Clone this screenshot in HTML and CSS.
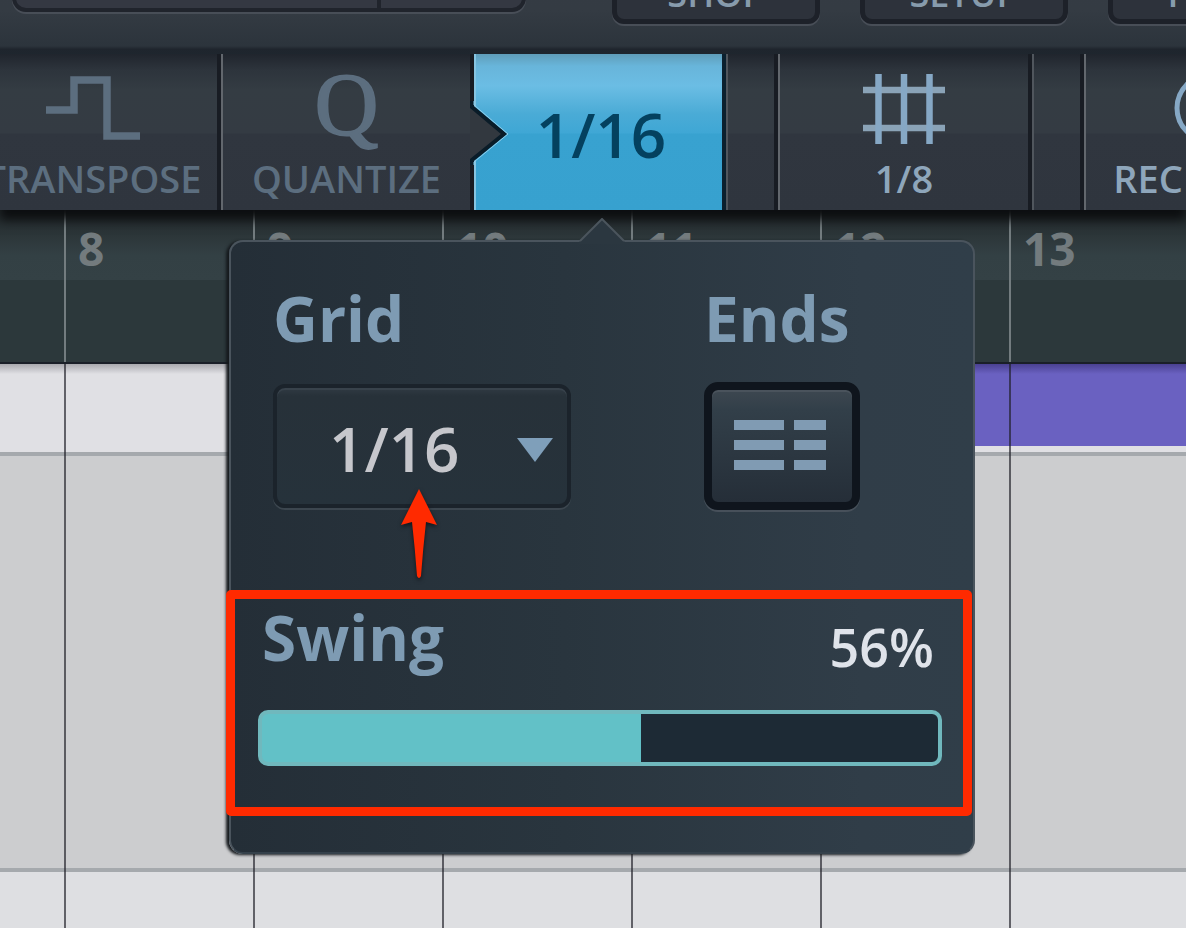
FILE: index.html
```html
<!DOCTYPE html>
<html lang="en">
<head>
<meta charset="utf-8">
<title>Quantize grid settings</title>
<link rel="stylesheet" href="styles.css">
</head>
<body>
<div class="app">
  <header class="topbar">
    <div class="display"><span class="display-part"></span><span class="display-part"></span></div>
    <nav class="menu">
      <button class="menu-button">SHOP</button>
      <button class="menu-button">SETUP</button>
      <button class="menu-button">HELP</button>
    </nav>
  </header>

  <div class="toolbar">
    <button class="tool muted first">
      <svg class="tool-icon" viewBox="0 0 94 72" width="94" height="72"><path d="M0 38H28V8H61V64H94" fill="none" stroke="currentColor" stroke-width="7.500"/></svg>
      <span class="tool-label">TRANSPOSE</span>
    </button>
    <button class="tool muted quantize">
      <span class="tool-letter">Q</span>
      <span class="tool-label">QUANTIZE</span>
    </button>
    <div class="anchor">
      <button class="tool-active" aria-expanded="true">1/16</button>
      <svg class="notch" viewBox="0 0 40 64" width="40" height="64"><path d="M0 5L34 33L0 60Z" fill="#32383f"/><path d="M2 0V6L34 33L2 59V64" fill="none" stroke="#0a1c28" stroke-width="4"/><path d="M4 0V4L38 33L4 61V64" fill="none" stroke="#8fcdea" stroke-width="1"/></svg>

      <section class="popover">
        <svg class="popover-tip" viewBox="0 0 48 26" width="48" height="26"><path d="M0 26L2 23L24 1L46 23L48 26Z" fill="#2b3740"/><path d="M2 23L24 1L46 23" fill="none" stroke="#4b555d" stroke-width="2"/></svg>
        <div class="fields">
          <label class="heading" for="grid">Grid</label>
          <label class="heading" for="ends">Ends</label>
          <div class="select-wrap">
            <select id="grid" class="select"><option>1/16</option><option>1/8</option></select>
            <svg class="caret" viewBox="0 0 36 24" width="36" height="24"><path d="M0 0H36L18 24Z" fill="#7f9fba"/></svg>
          </div>
          <button id="ends" class="ends">
            <svg viewBox="0 0 92 50" width="92" height="50" fill="#809bb3"><path d="M0 0H50V10H0zM60 0H92V10H60zM0 20H50V30H0zM60 20H92V30H60zM0 40H50V50H0zM60 40H92V50H60z"/></svg>
          </button>
        </div>
        <div class="swing">
          <div class="swing-head">
            <label class="heading" for="swing">Swing</label>
            <output class="percent" for="swing">56%</output>
          </div>
          <input id="swing" class="slider" type="range" min="0" max="100" value="56" style="--value:56%">
        </div>
        <svg class="pointer" viewBox="0 0 36 90" width="36" height="90"><path d="M18 0L36 36L25 33Q22 60 20 87Q18 91 16 87Q14 60 11 33L0 36Z" fill="#ff2a00"/></svg>
      </section>
    </div>
    <div class="spacer"></div>
    <button class="tool">
      <svg class="tool-icon" viewBox="0 0 82 72" width="82" height="72" fill="none" stroke-width="6.500"><path d="M0 18H82M0 56H82" stroke="#8aa3b7"/><path d="M15.500 2V72M41 2V72M66.500 2V72" stroke="#86a8c5"/></svg>
      <span class="tool-label">1/8</span>
    </button>
    <div class="spacer"></div>
    <button class="tool">
      <svg class="tool-icon" viewBox="0 0 72 72" width="72" height="72"><circle cx="36" cy="36" r="33" fill="none" stroke="#86a8c5" stroke-width="5"/></svg>
      <span class="tool-label">REC MODE</span>
    </button>
  </div>

  <div class="ruler">
    <span class="bar">8</span><span class="bar">9</span><span class="bar">10</span><span class="bar">11</span><span class="bar">12</span><span class="bar">13</span>
  </div>

  <main class="lanes">
    <div class="lane lane-clip"><div class="clip"></div></div>
    <div class="lane lane-tall"></div>
    <div class="lane lane-rest"></div>
  </main>
</div>
</body>
</html>
```
FILE: styles.css
```css
* { box-sizing: border-box; }

body {
  margin: 0;
  font-family: "Open Sans", "Noto Sans", sans-serif;
  font-weight: 600;
}

button, select { font: inherit; }

.app {
  display: flex;
  flex-direction: column;
  min-height: 100vh;
  overflow: hidden;
}

/* Top bar */
.topbar {
  display: flex;
  align-items: flex-start;
  flex: none;
  height: 94px;
  margin-top: -40px;
  padding-left: 12px;
  background: linear-gradient(#353b44 0, #343b43 50px, #2c343c 86px, #20262e 89px, #1f272f 100%);
}

.display {
  display: flex;
  flex: none;
  width: 514px;
  height: 52px;
  border: 4px solid #20242c;
  border-radius: 14px;
  background: #343842;
  box-shadow: 0 2px 0 #484e57;
}

.display-part { flex: 28; }
.display-part:first-child { flex: 72; border-right: 4px solid #20242c; }

.menu {
  display: flex;
  gap: 40px;
  margin-left: 86px;
}

.menu-button {
  flex: none;
  width: 208px;
  height: 64px;
  padding: 4px 0 0;
  border: 5px solid #1d2129;
  border-radius: 12px;
  background: #2d323b;
  box-shadow: 0 2px 0 #484e57;
  color: #879bac;
  font-size: 36px;
  line-height: 48px;
}

/* Toolbar */
.toolbar {
  position: relative;
  z-index: 2;
  display: flex;
  flex: none;
  height: 156px;
  background: linear-gradient(#20252d 0, #2d343c 16px, #343c43 36px, #343b43 79px, #30363f 80px, #2f353e 100%);
  box-shadow: 0 10px 10px #0c0e10;
}

.tool {
  display: flex;
  flex: none;
  flex-direction: column;
  align-items: center;
  gap: 10px;
  width: 254px;
  padding: 18px 0 0;
  border: 0;
  border-left: 2px solid #62676d;
  border-right: 4px solid #181c23;
  background: none;
  color: #8ea6bb;
  white-space: nowrap;
}

.first { margin-left: -33px; }
.quantize { width: 253px; }
.muted { color: #5c6e7f; }

.tool-icon { flex: none; }

.tool-letter {
  height: 72px;
  font: 88px/66px "Liberation Serif", serif;
  -webkit-text-stroke: 2px currentColor;
}

.tool-label { font-size: 38px; line-height: 48px; }

.spacer {
  flex: none;
  width: 52px;
  border-left: 2px solid #50565d;
  border-right: 4px solid #181c23;
}

.anchor {
  position: relative;
  flex: none;
  width: 252px;
}

.tool-active {
  width: 100%;
  height: 100%;
  padding: 4px 0 0 4px;
  border: 0;
  border-left: 2px solid #86c5e2;
  border-right: 4px solid #0b202e;
  background: linear-gradient(#5f9db9 0, #68b5da 12px, #6bbde4 32px, #4aabd6 60px, #3fa7d5 79px, #38a2d0 80px, #37a1cf 100%);
  color: #04415f;
  font-size: 62px;
}

.notch {
  position: absolute;
  top: 47px;
  left: -4px;
}

/* Popover */
.popover {
  position: absolute;
  top: 186px;
  left: 50%;
  width: 746px;
  margin-left: 2px;
  padding: 44px 0 36px;
  transform: translateX(-50%);
  border: 2px solid #4a545d;
  border-bottom-color: #35414b;
  border-radius: 14px;
  background: linear-gradient(90deg, #242e37, #29353e 45%, #303d48 85%, #303e49);
  box-shadow: -3px 1px 3px #15191d;
}

.popover-tip {
  position: absolute;
  top: -24px;
  left: 50%;
  margin-left: -24px;
}

.fields {
  display: grid;
  grid-template-columns: 431px 156px;
  row-gap: 32px;
  align-items: center;
  padding-left: 42px;
}

.heading {
  color: #7e9bb3;
  font-size: 62px;
  font-weight: 700;
  line-height: 64px;
}

.select-wrap {
  position: relative;
  width: 298px;
}

.select {
  display: block;
  width: 100%;
  height: 124px;
  padding: 4px 0 0 52px;
  appearance: none;
  border: 4px solid #1b232b;
  border-radius: 12px;
  background: linear-gradient(#303a43, #273139 8px, #26323b);
  box-shadow: 0 2px 0 #3c464f, inset 0 2px 0 #38424b;
  color: #c6c7cc;
  font-size: 62px;
}

.caret {
  position: absolute;
  top: 54px;
  right: 18px;
  pointer-events: none;
}

.ends {
  display: flex;
  align-items: center;
  justify-content: center;
  height: 128px;
  padding: 0 4px 2px 0;
  border: 8px solid #0f151d;
  border-radius: 14px;
  background: linear-gradient(#3d4750, #323f49 20px, #252e38);
  box-shadow: 0 2px 0 #47505a, inset 0 2px 0 #4a535c;
}

.swing {
  margin: 80px 1px 0 -5px;
  padding: 6px 21px 41px 23px;
  border: 9px solid #ff2a00;
  border-radius: 5px;
}

.swing-head {
  display: flex;
  align-items: flex-end;
  justify-content: space-between;
  padding: 0 8px 0 4px;
}

.percent {
  color: #dfe3ea;
  font-size: 52px;
  line-height: 44px;
}

.slider {
  display: block;
  width: 100%;
  height: 56px;
  margin: 41px 0 0;
  appearance: none;
  border: 4px solid #70b8bd;
  border-radius: 10px;
  background: linear-gradient(90deg, #62c1c7 var(--value), #1d2a35 var(--value));
}

.slider::-webkit-slider-thumb { appearance: none; width: 0; }

.pointer {
  position: absolute;
  top: 247px;
  left: 170px;
  filter: drop-shadow(0 2px 2px #10151a);
}

/* Timeline */
.ruler {
  display: flex;
  flex: none;
  height: 152px;
  padding-left: 64px;
  background: linear-gradient(#23292b 0, #334044 45px, #344145 70px, #2c383b 70px, #2c383b 100%);
}

.bar {
  flex: none;
  width: 189px;
  padding: 14px 0 0 12px;
  border-left: 2px solid #737c7f;
  color: #737b7e;
  font-size: 46px;
  font-weight: 700;
  line-height: 48px;
}

.lanes {
  position: relative;
  display: flex;
  flex: 1;
  flex-direction: column;
  border-top: 2px solid #1a1f28;
}

/* Bar lines, one every 189px */
.lanes::after {
  content: "";
  position: absolute;
  inset: 0 0 0 64px;
  background: repeating-linear-gradient(90deg, rgba(30, 30, 38, 0.650) 0 2px, transparent 2px 189px);
}

.lane { border-bottom: 4px solid #a5a9ad; }

.lane-clip {
  height: 92px;
  padding-left: 631px;
  background: linear-gradient(#a9a9ae, #e0e0e4 10px);
}

.clip {
  height: 82px;
  background: linear-gradient(#4a4191, #6a61c1 10px);
}

.lane-tall { height: 416px; background: #cccdcf; }
.lane-rest { flex: 1; border: 0; background: #dedfe2; }
```
